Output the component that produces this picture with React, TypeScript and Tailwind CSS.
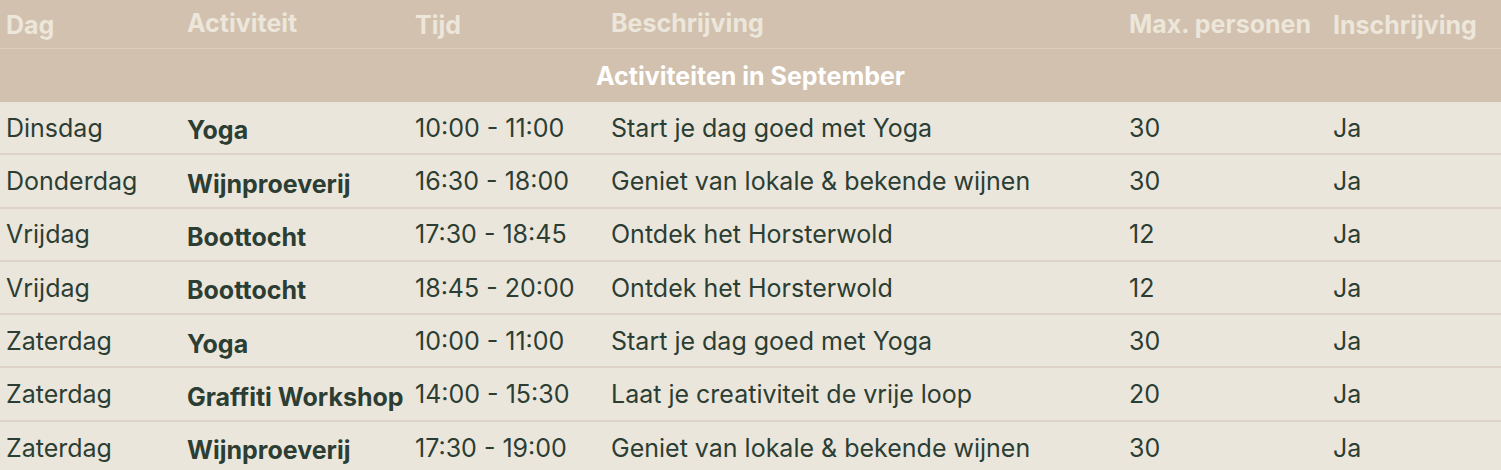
import React from 'react';

interface Activity {
  day: string;
  name: string;
  time: string;
  description: string;
  max: number;
  signup: string;
}

const ACTIVITIES: Activity[] = [
  { day: 'Dinsdag', name: 'Yoga', time: '10:00 - 11:00', description: 'Start je dag goed met Yoga', max: 30, signup: 'Ja' },
  { day: 'Donderdag', name: 'Wijnproeverij', time: '16:30 - 18:00', description: 'Geniet van lokale & bekende wijnen', max: 30, signup: 'Ja' },
  { day: 'Vrijdag', name: 'Boottocht', time: '17:30 - 18:45', description: 'Ontdek het Horsterwold', max: 12, signup: 'Ja' },
  { day: 'Vrijdag', name: 'Boottocht', time: '18:45 - 20:00', description: 'Ontdek het Horsterwold', max: 12, signup: 'Ja' },
  { day: 'Zaterdag', name: 'Yoga', time: '10:00 - 11:00', description: 'Start je dag goed met Yoga', max: 30, signup: 'Ja' },
  { day: 'Zaterdag', name: 'Graffiti Workshop', time: '14:00 - 15:30', description: 'Laat je creativiteit de vrije loop', max: 20, signup: 'Ja' },
  { day: 'Zaterdag', name: 'Wijnproeverij', time: '17:30 - 19:00', description: 'Geniet van lokale & bekende wijnen', max: 30, signup: 'Ja' },
];

// column widths shared by header and rows
const cols = 'grid grid-cols-[181px_228px_196px_518px_204px_1fr]';

export default function App() {
  return (
    <div className="w-full min-h-screen bg-[#ebe6dc] font-['Inter',sans-serif] overflow-hidden">
      {/* Header */}
      <div className="bg-[#d2c1ae]">
        <div className={`${cols} h-[49px] items-center border-b border-[#dccdbc] text-[25px] font-bold text-[#ece6db] whitespace-nowrap`}>
          <div className="pl-[6px] pt-[4px]">Dag</div>
          <div className="pl-[6px]">Activiteit</div>
          <div className="pl-[6px] pt-[4px]">Tijd</div>
          <div className="pl-[6px]">Beschrijving</div>
          <div className="pl-[6px] pt-[2px]">Max. personen</div>
          <div className="pl-[6px] pt-[3px]">Inschrijving</div>
        </div>
        <div className="h-[53px] pt-[2px] flex items-center justify-center text-[25px] font-bold text-white">
          Activiteiten in September
        </div>
      </div>

      {/* Rows */}
      <div className="flex flex-col">
        {ACTIVITIES.map((a, i) => (
          <div
            key={i}
            className={`${cols} h-[53.3px] items-center border-b-2 border-[#ddd3c6] text-[25px] text-[#2c3e33]`}
          >
            <div className="pl-[6px] pt-[2px]">{a.day}</div>
            <div className="pl-[6px] pt-[7px] font-bold whitespace-nowrap">{a.name}</div>
            <div className="pl-[6px] pt-[2px]">{a.time}</div>
            <div className="pl-[6px] pt-[2px]">{a.description}</div>
            <div className="pl-[6px] pt-[2px]">{a.max}</div>
            <div className="pl-[6px] pt-[2px]">{a.signup}</div>
          </div>
        ))}
      </div>
    </div>
  );
}
